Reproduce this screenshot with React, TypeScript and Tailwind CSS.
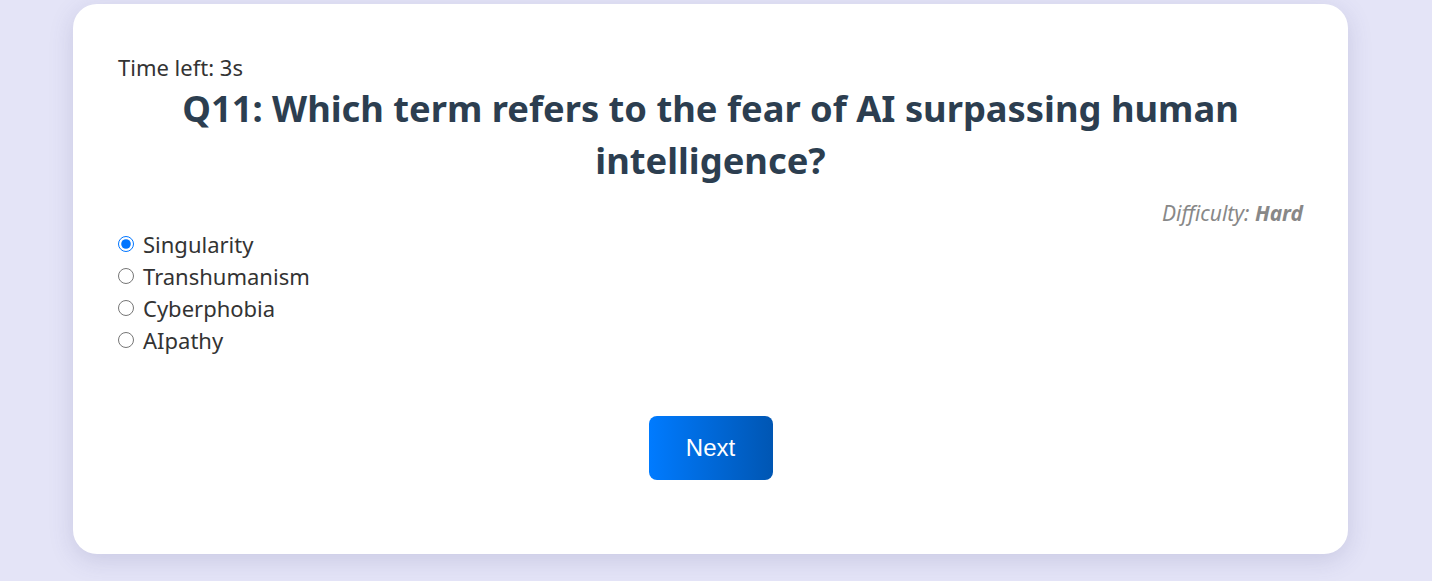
import React from "react";

export default function App() {
  const options = ["Singularity", "Transhumanism", "Cyberphobia", "AIpathy"];
  return (
    <div className="min-h-[581px] w-full bg-[#e4e4f7] pt-[4px] pb-[27px]" style={{ fontFamily: '"Noto Sans", sans-serif' }}>
      <div className="ml-[73px] w-[1275px] h-[550px] rounded-[24px] bg-white px-[45px] pt-[50px] shadow-[0_6px_24px_rgba(80,80,140,0.18)]">
        <div className="text-[22px] leading-[26px] text-[#333]">Time left: 3s</div>
        <h2 className="mt-[2px] text-center text-[36.3px] font-bold leading-[52px] text-[#2c3e50]">
          Q11: Which term refers to the fear of AI surpassing human intelligence?
        </h2>
        <div className="mt-[14px] text-right text-[21px] italic leading-[26px] text-[#888]">
          Difficulty: <b>Hard</b>
        </div>
        <div className="mt-[2px] flex flex-col">
          {options.map((o, i) => (
            <label key={o} className="flex h-[32px] items-center text-[22px] text-[#333]">
              <input type="radio" name="q" defaultChecked={i === 0} className="m-0 mr-[9px] h-[16px] w-[16px] accent-[#0075ff]" />
              {o}
            </label>
          ))}
        </div>
        <div className="mt-[60px] flex justify-center">
          <button
            className="h-[64px] w-[124px] rounded-[8px] bg-gradient-to-r from-[#007bff] to-[#0056b3] text-[24px] text-white"
            style={{ fontFamily: '"Liberation Sans", Arial, sans-serif' }}
          >
            Next
          </button>
        </div>
      </div>
    </div>
  );
}
